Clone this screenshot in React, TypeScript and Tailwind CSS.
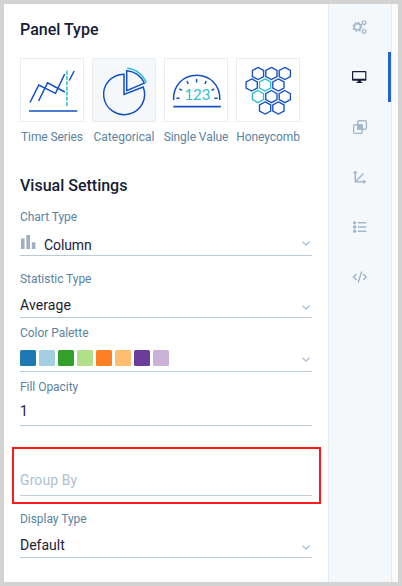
import type { ReactNode } from "react";

const BLUE = "#1450c4";
const CYAN = "#2fbfd0";

function hexPoints(cx: number, cy: number) {
  return [
    [0, -6.1],
    [5.6, -3],
    [5.6, 3],
    [0, 6.1],
    [-5.6, 3],
    [-5.6, -3],
  ]
    .map(([x, y]) => `${cx + x},${cy + y}`)
    .join(" ");
}

const blueCells = [
  [258, 73.5], [271.4, 73.5], [284.8, 73.5],
  [251.7, 85], [278.4, 85],
  [271.4, 96.6], [284.8, 96.6],
  [265.1, 108], [278.4, 108],
];
const cyanCells = [[265.1, 85], [258, 96.6]];

function TimeSeriesIcon() {
  return (
    <svg viewBox="21 59 62 62" className="size-[62px]" fill="none" stroke={BLUE} strokeWidth="1.5">
      <path d="M30 102.5 38.8 85 55.5 93.3 64.7 74" />
      <path d="M38.6 101 47.5 82.8 64.8 92" />
      <path d="M69.2 80.5 74.2 71" />
      <path d="M29 111H77.3" strokeWidth="1.6" />
      <path d="M66.9 70.8V107" stroke={CYAN} strokeDasharray="4 1.2" />
    </svg>
  );
}

function CategoricalIcon() {
  return (
    <svg viewBox="93 59 62 62" className="size-[62px]" fill="none" stroke={BLUE} strokeWidth="1.5">
      <path d="M124 74.2A20.5 20.2 0 1 0 143.2 87L124 94.4Z" />
      <path d="M126.7 70.7A20.5 20.5 0 0 1 144.3 83.2L126.7 90.6Z" />
      <path d="M127.2 68.3A22 22 0 0 1 146.2 83" stroke={CYAN} />
    </svg>
  );
}

function SingleValueIcon() {
  return (
    <svg viewBox="165 59 62 62" className="size-[62px]" fill="none" stroke={BLUE} strokeWidth="1.5">
      <path d="M173.6 100C173 85 183.5 75.2 196.7 75.2S220.4 85 219.8 100" />
      <path d="M173.3 106.6H220.8" strokeWidth="1.6" />
      <path d="M176.4 98.2H179.6M214.4 98.2H217.6M179.3 88.8 182 90.4M214.3 88.8 211.6 90.4M187 81 188.2 84M206.2 81 205 84M196.6 79V82.5" />
      <text x="184.4" y="100" fill={CYAN} stroke="none" fontSize="16" textLength="26" lengthAdjust="spacingAndGlyphs" fontFamily="Lato, sans-serif">123</text>
    </svg>
  );
}

function HoneycombIcon() {
  return (
    <svg viewBox="237 59 62 62" className="size-[62px]" fill="none" strokeWidth="1.35">
      {blueCells.map(([x, y]) => (
        <polygon key={`${x}-${y}`} points={hexPoints(x, y)} stroke={BLUE} />
      ))}
      {cyanCells.map(([x, y]) => (
        <polygon key={`${x}-${y}`} points={hexPoints(x, y)} stroke={CYAN} />
      ))}
    </svg>
  );
}

const panelTypes = [
  { name: "Time Series", icon: <TimeSeriesIcon />, active: false, text: "tracking-[-0.1px]" },
  { name: "Categorical", icon: <CategoricalIcon />, active: true, text: "tracking-[0px]" },
  { name: "Single Value", icon: <SingleValueIcon />, active: false, text: "tracking-[-0.06px]" },
  { name: "Honeycomb", icon: <HoneycombIcon />, active: false, text: "tracking-[-0.08px]" },
];

const palette = [
  "bg-[#1f78b4]", "bg-[#a6cee3]", "bg-[#33a02c]", "bg-[#b2df8a]",
  "bg-[#ff7f24]", "bg-[#fdbf6f]", "bg-[#6a3d9a]", "bg-[#cab2d6]",
];

function Chevron({ className }: { className: string }) {
  return (
    <svg viewBox="0 0 8 5" className={`mr-0.5 h-[5px] w-2 shrink-0 ${className}`} fill="none" stroke="#adbfd1" strokeWidth="1.3">
      <path d="M.5 .7 4 4 7.5 .7" />
    </svg>
  );
}

function Field({ label, children, className }: { label: string; children: ReactNode; className: string }) {
  return (
    <div className={`flex h-[47px] flex-col border-b border-[#b9cad8] ${className}`}>
      <div className="h-4 text-xs leading-4 tracking-[-0.04px] text-[#5b83a0]">{label}</div>
      <div className="flex h-[30px] items-start justify-between text-sm leading-5 text-[#1b2138]">{children}</div>
    </div>
  );
}

function GearsIcon() {
  return (
    <svg viewBox="0 0 16 16" className="size-4" fill="none" stroke="#9fb7ca">
      <circle cx="5.4" cy="7.8" r="3.2" strokeWidth="1.6" />
      <circle cx="5.4" cy="7.8" r="4.5" strokeWidth="1.1" strokeDasharray="1.8 1.73" />
      <circle cx="12" cy="3.7" r="1.7" strokeWidth="1.1" />
      <circle cx="12" cy="3.7" r="2.5" strokeWidth=".8" strokeDasharray="1.1 1.5" />
      <circle cx="12" cy="12.5" r="1.7" strokeWidth="1.1" />
      <circle cx="12" cy="12.5" r="2.5" strokeWidth=".8" strokeDasharray="1.1 1.5" />
    </svg>
  );
}

function MonitorIcon() {
  return (
    <svg viewBox="0 0 16 16" className="size-4" fill="#191f36">
      <path fillRule="evenodd" d="M.8 2H13.6Q14.4 2 14.4 2.8V11Q14.4 11.8 13.6 11.8H8.9L9.3 13.2H10.6V13.9H4.2V13.2H5.5L5.9 11.8H.8Q0 11.8 0 11V2.8Q0 2 .8 2ZM1.2 3.2V9.7H13.2V3.2Z" />
    </svg>
  );
}

function OverlapIcon() {
  return (
    <svg viewBox="0 0 16 16" className="size-4" fill="none" stroke="#a2b9cc" strokeWidth="1.4">
      <rect x="5.8" y="1.7" width="8.6" height="8.6" rx="1.2" />
      <rect x="1.6" y="5.8" width="8.6" height="8.6" rx="1.2" />
      <rect x="5.8" y="5.8" width="4.4" height="4.4" fill="#a2b9cc" />
    </svg>
  );
}

function AxesIcon() {
  return (
    <svg viewBox="0 0 16 16" className="size-4" fill="none" stroke="#9fb7ca" strokeWidth="1.5">
      <path d="M3.3 2.5V12.8H12.8M3.6 12.5 11.5 4.5" />
      <path d="M1.6 4.1 3.3 1.9 5 4.1ZM11.8 11.1 13.9 12.8 11.8 14.5Z" fill="#9fb7ca" strokeWidth=".7" />
    </svg>
  );
}

function ListIcon() {
  return (
    <svg viewBox="0 0 16 16" className="size-4" fill="#9fb7ca">
      <circle cx="2.6" cy="3.8" r="1.6" />
      <circle cx="2.6" cy="8" r="1.8" />
      <circle cx="2.6" cy="12.2" r="1.6" />
      <path d="M5.8 3H14.3V4.5H5.8ZM5.8 7.3H14.3V8.7H5.8ZM5.8 11.5H14.3V13H5.8Z" />
    </svg>
  );
}

function CodeIcon() {
  return (
    <svg viewBox="0 0 16 16" className="size-4" fill="none" stroke="#9fb7ca" strokeWidth="1.4">
      <path d="M4.6 5 1.5 8 4.6 11M11.2 5 14.3 8 11.2 11M9.7 2.5 6.2 13.5" />
    </svg>
  );
}

const navItems = [
  { id: "general", icon: <GearsIcon /> },
  { id: "visual", icon: <MonitorIcon />, active: true },
  { id: "overrides", icon: <OverlapIcon /> },
  { id: "axes", icon: <AxesIcon /> },
  { id: "legend", icon: <ListIcon /> },
  { id: "json", icon: <CodeIcon /> },
];

export default function App() {
  return (
    <div className="flex h-[586px] w-[402px] overflow-hidden border-4 border-[#d3d3d3] bg-white font-['Roboto',sans-serif]">
      <main className="w-[324px] shrink-0 px-4">
        <h2 className="mt-4 h-5 text-base leading-5 font-medium text-[#161d35]">Panel Type</h2>
        <div className="mt-[18px] flex gap-2">
          {panelTypes.map((type) => (
            <div key={type.name} className="flex w-16 flex-col items-center">
              <div className={`size-16 border border-[#e9eef2] ${type.active ? "bg-[#f4f8fb]" : "bg-white"}`}>{type.icon}</div>
              <span className={`mt-[7px] text-xs leading-4 whitespace-nowrap text-[#5b83a0] ${type.text}`}>{type.name}</span>
            </div>
          ))}
        </div>

        <h2 className="mt-[31px] h-5 text-base leading-5 font-medium text-[#161d35]">Visual Settings</h2>
        <div className="w-[292px]">
          <Field label="Chart Type" className="mt-[13px]">
            <div className="mt-2.5 flex tracking-[-0.1px]">
              <svg viewBox="0 0 16 16" className="-mt-px mr-2 size-4" fill="#9fb0c4">
                <path d="M1 4.6H4.6V15H1ZM6.4 1H10V15H6.4ZM11.8 8.2H15.4V15H11.8Z" />
              </svg>
              Column
            </div>
            <Chevron className="mt-4" />
          </Field>
          <Field label="Statistic Type" className="mt-[15px]">
            <span className="mt-2 tracking-[0.1px]">Average</span>
            <Chevron className="mt-[18px]" />
          </Field>
          <Field label="Color Palette" className="mt-[7px]">
            <div className="mt-[9px] flex gap-[3px]">
              {palette.map((color) => (
                <span key={color} className={`size-4 rounded-[1.5px] ${color}`} />
              ))}
            </div>
            <Chevron className="mt-4" />
          </Field>
          <Field label="Fill Opacity" className="mt-[7px]">
            <span className="mt-1.5">1</span>
          </Field>
          <div className="relative mt-[22px] h-12 border-b border-[#c3d0db] pt-[22px] text-sm leading-5 tracking-[0.1px] text-[#b0bfce]">
            Group By
            <div className="absolute -top-px -left-2 h-[57px] w-[309px] border-2 border-[#fa1a1a]" />
          </div>
          <Field label="Display Type" className="mt-[15px]">
            <span className="mt-2">Default</span>
            <Chevron className="mt-[18px]" />
          </Field>
        </div>
      </main>

      <nav className="flex w-16 shrink-0 flex-col border-x border-[#e6edf2] bg-[#f4f8fb]">
        {navItems.map((item) => (
          <div key={item.id} className={`flex h-[50px] items-center justify-center ${item.id === "general" ? "-mt-0.5" : ""} ${item.active ? "border-r-[3px] border-[#1f62dc] pl-[3px]" : ""}`}>
            {item.icon}
          </div>
        ))}
      </nav>
      <div className="flex-1 bg-[#fafafa]" />
    </div>
  );
}
